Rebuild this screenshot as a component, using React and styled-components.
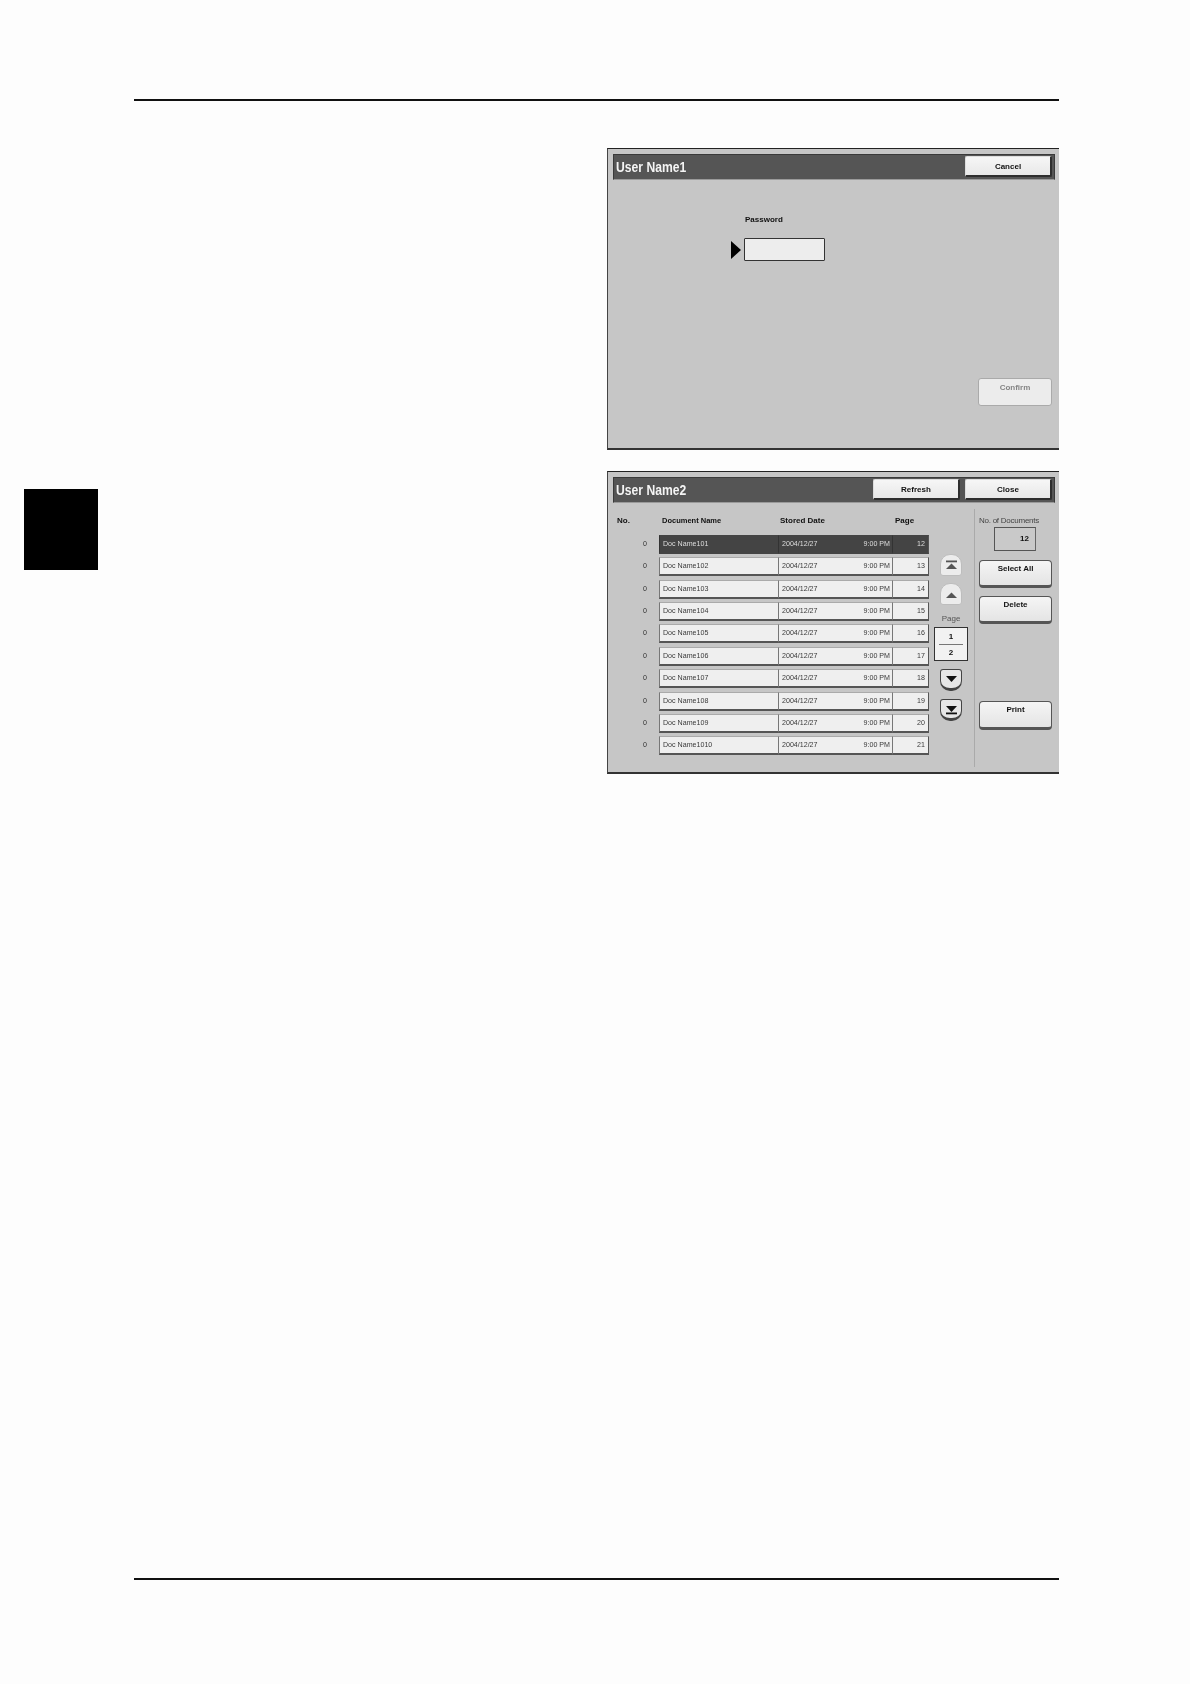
import React from "react";
import styled, { createGlobalStyle } from "styled-components";

const Global = createGlobalStyle`
  html, body { margin: 0; padding: 0; background: #fdfdfd; }
  #root { width: 1190px; height: 1684px; }
  * { box-sizing: border-box; }
`;

const Page = styled.div`
  width: 1190px;
  height: 1684px;
  display: flex;
  background: #fdfdfd;
  font-family: "Liberation Sans", Arial, sans-serif;
  color: #111;
`;
const Margin = styled.aside`
  width: 134px;
  padding: 489px 0 0 24px;
`;
const ChapterTab = styled.div`
  width: 74px;
  height: 81px;
  background: #000;
`;
const Content = styled.main`
  width: 925px;
  display: flex;
  flex-direction: column;
  padding: 99px 0 104px;
`;
const Rule = styled.hr`
  width: 100%;
  height: 2px;
  margin: 0;
  border: 0;
  background: #111;
`;
const FooterRule = styled(Rule)`
  margin-top: auto;
`;
const Panel = styled.section`
  align-self: flex-end;
  width: 452px;
  height: ${(p) => p.$h}px;
  margin-top: ${(p) => p.$mt}px;
  padding: 5px 4px 0 5px;
  display: flex;
  flex-direction: column;
  background: #c6c6c6;
  border-top: 1px solid #222;
  border-left: 1px solid #444;
  border-bottom: 2px solid #333;
  filter: blur(0.5px);
`;
const TitleBar = styled.header`
  height: 26px;
  flex: none;
  display: flex;
  align-items: center;
  gap: 5px;
  padding: 0 2px 1px 2px;
  background: #555;
  border: 1px solid #3a3a3a;
  border-bottom-color: #9a9a9a;
`;
const Title = styled.h1`
  flex: 1;
  margin: 0;
  font-size: 15px;
  line-height: 18px;
  font-weight: 700;
  color: #f4f4f4;
  white-space: nowrap;
  transform: scaleX(0.81);
  transform-origin: left center;
`;
const BarButton = styled.button`
  width: ${(p) => p.$w}px;
  height: 21px;
  padding: 0;
  font: 700 8px "Liberation Sans", Arial, sans-serif;
  color: #111;
  background: linear-gradient(#f6f6f6, #e8e8e8);
  border: 1px solid #ddd;
  border-right: 2px solid #2e2e2e;
  border-bottom: 2px solid #2e2e2e;
  border-radius: 2px;
`;
const LoginBody = styled.div`
  flex: 1;
  display: flex;
  flex-direction: column;
  padding: 0 3px 0 0;
`;
const PasswordBlock = styled.div`
  margin: 34px 0 0 131px;
`;
const FieldLabel = styled.div`
  margin-left: 1px;
  font-size: 8px;
  line-height: 12px;
  font-weight: 700;
`;
const FieldRow = styled.div`
  display: flex;
  align-items: center;
  gap: 3px;
  margin: 12px 0 0 -13px;
`;
const Pointer = styled.span`
  width: 0;
  height: 0;
  border-style: solid;
  border-width: 9px 0 9px 10px;
  border-color: transparent transparent transparent #000;
`;
const PasswordInput = styled.div`
  width: 81px;
  height: 23px;
  background: #ededed;
  border: 1px solid #333;
  border-radius: 1px;
`;
const ConfirmButton = styled.button`
  align-self: flex-end;
  width: 74px;
  height: 28px;
  margin-top: 117px;
  padding: 0 0 10px;
  font: 700 8px "Liberation Sans", Arial, sans-serif;
  color: #858585;
  background: #ececec;
  border: 1px solid #aaa;
  border-radius: 3px;
`;
const ListBody = styled.div`
  flex: 1;
  display: flex;
`;
const ListColumn = styled.div`
  width: 318px;
  flex: none;
  padding-top: 12px;
`;
const HeaderRow = styled.div`
  display: grid;
  grid-template-columns: 46px 118px 115px 1fr;
  height: 12px;
  margin-bottom: 8px;
  font-size: 8px;
  line-height: 12px;
  font-weight: 700;
`;
const HeaderCell = styled.span`
  padding-left: ${(p) => p.$pl}px;
  font-size: ${(p) => p.$size || 8}px;
  white-space: nowrap;
`;
const Rows = styled.div`
  display: flex;
  flex-direction: column;
  gap: 4.37px;
`;
const Row = styled.div`
  display: grid;
  grid-template-columns: 46px 119px 114px 37px;
  height: 18px;
  font-size: 7.1px;
  line-height: 16px;
`;
const Index = styled.span`
  padding-right: 12px;
  text-align: right;
  line-height: 18px;
  color: #333;
`;
const Cell = styled.div`
  display: flex;
  justify-content: ${(p) => p.$justify || "flex-start"};
  padding: 0 ${(p) => p.$pr ?? 2}px 0 3px;
  color: ${(p) => (p.$on ? "#ddd" : "#3a3a3a")};
  background: ${(p) => (p.$on ? "#444" : "#efefef")};
  border-top: 1px solid ${(p) => (p.$on ? "#444" : "#aaa")};
  border-left: 1px solid ${(p) => (p.$on ? "#333" : "#777")};
  border-right: ${(p) => (p.$last ? 1 : 0)}px solid #555;
  border-bottom: 2px solid ${(p) => (p.$on ? "#444" : "#555")};
  white-space: nowrap;
`;
const NavColumn = styled.div`
  width: 40px;
  flex: none;
  display: flex;
  flex-direction: column;
  align-items: center;
  padding-top: 51px;
`;
const NavButton = styled.button`
  width: 22px;
  height: 22px;
  margin-top: ${(p) => p.$mt || 0}px;
  padding: 0;
  display: flex;
  align-items: center;
  justify-content: center;
  background: ${(p) => (p.$up ? "#ececec" : "#e6e6e6")};
  border: 1px solid ${(p) => (p.$up ? "#bdbdbd" : "#444")};
  border-bottom-width: ${(p) => (p.$up ? 1 : 3)}px;
  border-radius: ${(p) => (p.$up ? "10px 10px 3px 3px" : "3px 3px 10px 10px")};
`;
const PageLabel = styled.div`
  margin-top: 9px;
  font-size: 8px;
  line-height: 10px;
  color: #555;
`;
const PageBox = styled.div`
  width: 34px;
  height: 34px;
  margin-top: 3px;
  display: flex;
  flex-direction: column;
  align-items: center;
  justify-content: center;
  font-size: 8px;
  font-weight: 700;
  line-height: 13px;
  background: #f2f2f2;
  border: 1px solid #333;
`;
const PageDivider = styled.i`
  width: 24px;
  height: 1px;
  margin: 1px 0;
  background: #777;
`;
const SideColumn = styled.div`
  flex: 1;
  margin: 6px 0 5px 3px;
  padding: 6px 3px 0 4px;
  display: flex;
  flex-direction: column;
  border-left: 1px solid #aaa;
`;
const CountLabel = styled.div`
  font-size: 8px;
  line-height: 12px;
  letter-spacing: -0.25px;
  color: #444;
  white-space: nowrap;
`;
const CountBox = styled.div`
  align-self: flex-end;
  width: 42px;
  height: 24px;
  margin: 0 16px 0 0;
  padding-right: 6px;
  text-align: right;
  font-size: 8px;
  font-weight: 700;
  line-height: 21px;
  background: #c9c9c9;
  border: 1px solid #555;
  border-right-color: #666;
`;
const ActionButton = styled.button`
  width: 73px;
  height: ${(p) => p.$h || 28}px;
  margin-top: ${(p) => p.$mt}px;
  padding: 0 0 10px;
  font: 700 8px "Liberation Sans", Arial, sans-serif;
  color: #111;
  background: linear-gradient(#f5f5f5, #e4e4e4);
  border: 1px solid #555;
  border-bottom: 3px solid #555;
  border-radius: 4px;
`;

const NavIcon = ({ dir, bar, color }) => {
  const up = dir === "up";
  return (
    <svg width="13" height="13" viewBox="0 0 13 13">
      <polygon
        points={up ? "1,10 12,10 6.5,4.5" : "1,3 12,3 6.5,9"}
        fill={color}
      />
      {bar && <rect x="1" y={up ? 1.5 : 9.5} width="11" height="1.8" fill={color} />}
    </svg>
  );
};

const docs = ["101", "102", "103", "104", "105", "106", "107", "108", "109", "1010"];

export default function App() {
  return (
    <Page>
      <Global />
      <Margin>
        <ChapterTab />
      </Margin>
      <Content>
        <Rule />
        <Panel $h={302} $mt={47}>
          <TitleBar>
            <Title>User Name1</Title>
            <BarButton $w={87}>Cancel</BarButton>
          </TitleBar>
          <LoginBody>
            <PasswordBlock>
              <FieldLabel>Password</FieldLabel>
              <FieldRow>
                <Pointer />
                <PasswordInput />
              </FieldRow>
            </PasswordBlock>
            <ConfirmButton>Confirm</ConfirmButton>
          </LoginBody>
        </Panel>
        <Panel $h={303} $mt={21}>
          <TitleBar>
            <Title>User Name2</Title>
            <BarButton $w={87}>Refresh</BarButton>
            <BarButton $w={87}>Close</BarButton>
          </TitleBar>
          <ListBody>
            <ListColumn>
              <HeaderRow>
                <HeaderCell $pl={4}>No.</HeaderCell>
                <HeaderCell $pl={3} $size={7.5}>Document Name</HeaderCell>
                <HeaderCell $pl={3}>Stored Date</HeaderCell>
                <HeaderCell $pl={3}>Page</HeaderCell>
              </HeaderRow>
              <Rows>
                {docs.map((d, i) => {
                  const on = i === 0;
                  return (
                    <Row key={d}>
                      <Index>0</Index>
                      <Cell $on={on}>Doc Name{d}</Cell>
                      <Cell $on={on} $justify="space-between">
                        <span>2004/12/27</span>
                        <span>9:00 PM</span>
                      </Cell>
                      <Cell $on={on} $last $justify="flex-end" $pr={3}>
                        {12 + i}
                      </Cell>
                    </Row>
                  );
                })}
              </Rows>
            </ListColumn>
            <NavColumn>
              <NavButton $up>
                <NavIcon dir="up" bar color="#555" />
              </NavButton>
              <NavButton $up $mt={7}>
                <NavIcon dir="up" color="#555" />
              </NavButton>
              <PageLabel>Page</PageLabel>
              <PageBox>
                <span>1</span>
                <PageDivider />
                <span>2</span>
              </PageBox>
              <NavButton $mt={8}>
                <NavIcon dir="down" color="#111" />
              </NavButton>
              <NavButton $mt={8}>
                <NavIcon dir="down" bar color="#111" />
              </NavButton>
            </NavColumn>
            <SideColumn>
              <CountLabel>No. of Documents</CountLabel>
              <CountBox>12</CountBox>
              <ActionButton $mt={9}>Select All</ActionButton>
              <ActionButton $mt={8}>Delete</ActionButton>
              <ActionButton $mt={77} $h={29}>Print</ActionButton>
            </SideColumn>
          </ListBody>
        </Panel>
        <FooterRule />
      </Content>
    </Page>
  );
}
